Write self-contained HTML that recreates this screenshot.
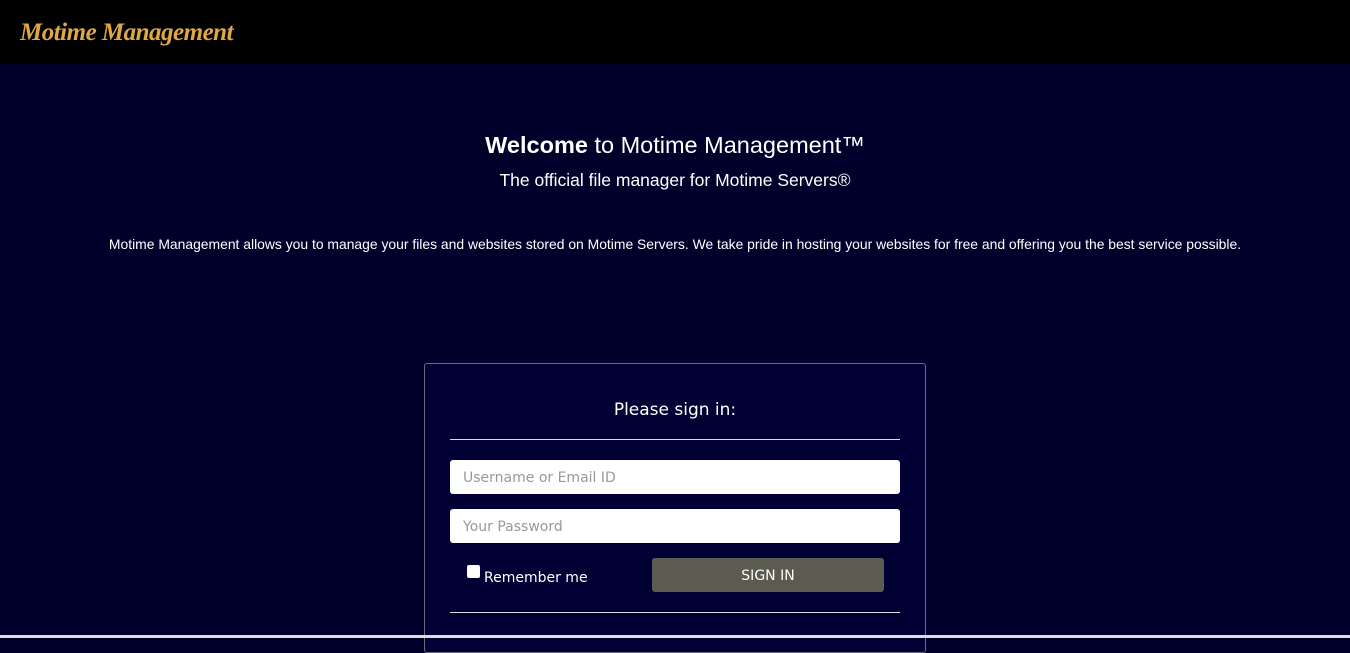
<!DOCTYPE html>
<html><head><meta charset="utf-8"><style>
*{box-sizing:border-box;margin:0;padding:0}
body{width:1350px;height:638px;overflow:hidden;background:#00002a;font-family:"Liberation Sans",sans-serif;position:relative}
.top{height:64px;background:#000;position:relative}
.logo{position:absolute;left:20px;top:19px;font-family:"Liberation Serif",serif;font-style:italic;font-weight:bold;font-size:25px;color:#e0a845;letter-spacing:-0.5px}
h1{position:absolute;top:132px;width:100%;text-align:center;color:#fff;font-weight:normal;font-size:23.5px}
h1 b{font-weight:bold}
.sub{position:absolute;top:170px;width:100%;text-align:center;color:#fff;font-size:17.5px}
.desc{position:absolute;top:236px;width:100%;text-align:center;color:#fff;font-size:13.9px}
.panel{position:absolute;left:424px;top:363px;width:502px;height:290px;background:#000035;border:1px solid #6a6a80;border-radius:3px}
.ps{position:absolute;top:36px;width:100%;text-align:center;color:#fff;font-family:"DejaVu Sans",sans-serif;font-size:17px}
.hr{position:absolute;left:25px;width:450px;height:1px;background:#ddd}
.in{position:absolute;left:25px;width:450px;height:34px;background:#fff;border-radius:3px;color:#999;font-family:"DejaVu Sans",sans-serif;font-size:14px;padding:10px 13px 0}
.cb{position:absolute;left:42px;top:201px;width:13px;height:13px;background:#fff;border-radius:2px}
.rm{position:absolute;left:59px;top:206px;color:#fff;font-family:"DejaVu Sans",sans-serif;font-size:14px}
.btn{position:absolute;left:227px;top:194px;width:232px;height:34px;background:#5b5b4f;border-radius:3px;color:#fff;font-family:"DejaVu Sans",sans-serif;font-size:14px;text-align:center;line-height:36px}
.bot{position:absolute;left:0;top:635px;width:100%;height:3px;background:#ddd;z-index:5}
</style></head><body>
<div class="top"><div class="logo">Motime Management</div></div>
<h1><b>Welcome</b> to Motime Management™</h1>
<div class="sub">The official file manager for Motime Servers®</div>
<div class="desc">Motime Management allows you to manage your files and websites stored on Motime Servers. We take pride in hosting your websites for free and offering you the best service possible.</div>
<div class="panel">
<div class="ps">Please sign in:</div>
<div class="hr" style="top:75px"></div>
<div class="in" style="top:96px">Username or Email ID</div>
<div class="in" style="top:145px">Your Password</div>
<div class="cb"></div><div class="rm">Remember me</div>
<div class="btn">SIGN IN</div>
<div class="hr" style="top:248px"></div>
</div>
<div class="bot"></div>
</body></html>
